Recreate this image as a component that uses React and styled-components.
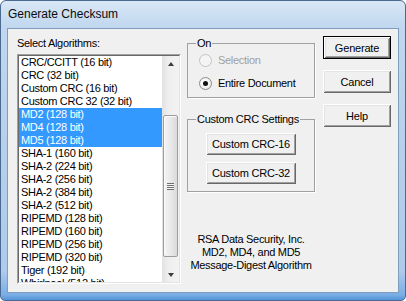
import React from 'react';
import styled, { createGlobalStyle } from 'styled-components';

const GlobalStyle = createGlobalStyle`
  html, body {
    margin: 0;
    padding: 0;
    background: #ffffff;
  }
  #root {
    width: 406px;
    height: 301px;
  }
`;

const Window = styled.div`
  box-sizing: border-box;
  width: 406px;
  height: 301px;
  display: flex;
  flex-direction: column;
  padding: 0 6px 7px 6px;
  border: 1px solid #4a6a92;
  border-radius: 6px 6px 5px 5px;
  background: linear-gradient(
    to bottom,
    #d9e7f6 0px,
    #c0d7ef 26px,
    #b9d1ea 120px,
    #aecbec 270px,
    #79ade4 294px,
    #4d8ed6 300px
  );
  font-family: 'Liberation Sans', Arial, sans-serif;
  font-size: 11px;
  letter-spacing: -0.3px;
  color: #000;
`;

const TitleBar = styled.div`
  height: 27px;
  display: flex;
  align-items: center;
  padding: 0 0 1px 1px;
  box-sizing: border-box;
  font-size: 12px;
  letter-spacing: 0;
  color: #0c0c0c;
`;

const Client = styled.div`
  flex: 1;
  display: flex;
  align-items: flex-start;
  background: #f0f0f0;
  border: 1px solid #7f9dbf;
  padding: 7px 0 0 9px;
`;

const LeftColumn = styled.div`
  width: 164px;
  padding-top: 1px;
  display: flex;
  flex-direction: column;
`;

const Label = styled.div`
  line-height: 13px;
  height: 13px;
  margin-bottom: 4px;
`;

const ListBox = styled.div`
  height: 230px;
  box-sizing: border-box;
  border: 1px solid;
  border-color: #a0a0a0 #ffffff #ffffff #a0a0a0;
`;

const ListInner = styled.div`
  height: 100%;
  box-sizing: border-box;
  display: flex;
  border: 1px solid;
  border-color: #696969 #e3e3e3 #e3e3e3 #696969;
  background: #ffffff;
`;

const Items = styled.div`
  flex: 1;
  overflow: hidden;
`;

const Item = styled.div`
  height: 13px;
  line-height: 13px;
  padding-left: 2px;
  white-space: nowrap;
  background: ${(p) => (p.$selected ? '#3399ff' : 'transparent')};
  color: ${(p) => (p.$selected ? '#ffffff' : '#000000')};
`;

const ScrollBar = styled.div`
  width: 17px;
  display: flex;
  flex-direction: column;
  background: linear-gradient(to right, #e2e2e2, #eeeeee 35%, #f3f3f3);
`;

const ArrowButton = styled.div`
  height: 17px;
  display: flex;
  align-items: center;
  justify-content: center;
`;

const Triangle = styled.div`
  width: 0;
  height: 0;
  border-left: 3.5px solid transparent;
  border-right: 3.5px solid transparent;
  ${(p) =>
    p.$down
      ? 'border-top: 4px solid #3c3c3c; margin-top: 2px;'
      : 'border-bottom: 4px solid #3c3c3c; margin-bottom: 2px;'}
`;

const Track = styled.div`
  flex: 1;
  display: flex;
  flex-direction: column;
`;

const Thumb = styled.div`
  margin: 42px 1px 0 1px;
  height: 142px;
  box-sizing: border-box;
  border: 1px solid #9c9c9c;
  border-radius: 2px;
  background: linear-gradient(to right, #f4f4f4, #e9e9e9 50%, #dadada);
  box-shadow: inset 1px 1px #fbfbfb;
  display: flex;
  align-items: center;
  justify-content: center;
`;

const Grip = styled.div`
  width: 7px;
  height: 7px;
  background: repeating-linear-gradient(
    to bottom,
    #6f6f6f 0px,
    #6f6f6f 1px,
    #f6f6f6 1px,
    #f6f6f6 2px
  );
`;

const MiddleColumn = styled.div`
  width: 128px;
  margin-left: 6px;
  padding-top: 1px;
  display: flex;
  flex-direction: column;
`;

const GroupBox = styled.fieldset`
  margin: ${(p) => (p.$first ? '0' : '15px 0 0 0')};
  padding: ${(p) => p.$pad};
  min-width: 0;
  border: 1px solid #a0a0a0;
  box-shadow: 1px 1px 0 #ffffff;
  display: flex;
  flex-direction: column;
  gap: ${(p) => p.$gap};
  align-items: ${(p) => (p.$center ? 'center' : 'stretch')};
`;

const Legend = styled.legend`
  padding: 0 1px;
  margin-left: 8px;
  line-height: 13px;
  height: 13px;
`;

const RadioRow = styled.label`
  height: 20px;
  display: flex;
  align-items: center;
  gap: 6px;
  padding-left: 11px;
  color: ${(p) => (p.$disabled ? '#a0a0a0' : '#000000')};
`;

const RadioCircle = styled.span`
  width: 13px;
  height: 13px;
  box-sizing: border-box;
  border-radius: 50%;
  border: 1px solid ${(p) => (p.$disabled ? '#c4c4c4' : '#8a8a8a')};
  background: ${(p) =>
    p.$disabled
      ? '#f4f4f4'
      : 'radial-gradient(circle at 40% 40%, #ffffff 0%, #f2f2f2 55%, #dcdcdc 100%)'};
  display: flex;
  align-items: center;
  justify-content: center;
`;

const RadioDot = styled.span`
  width: 5px;
  height: 5px;
  border-radius: 50%;
  background: #111111;
`;

const Button = styled.button`
  box-sizing: border-box;
  width: ${(p) => p.$width};
  height: ${(p) => p.$height};
  padding: 0;
  font-family: 'Liberation Sans', Arial, sans-serif;
  font-size: 11px;
  letter-spacing: -0.2px;
  color: #000;
  background: #f0f0f0;
  border: ${(p) => (p.$default ? '1px solid #000000' : 'none')};
  box-shadow: inset 1px 1px #ffffff, inset -1px -1px #696969,
    inset 2px 2px #e3e3e3, inset -2px -2px #a0a0a0;
  cursor: default;
`;

const Credit = styled.div`
  margin-top: 41px;
  text-align: center;
  line-height: 13px;
  white-space: nowrap;
`;

const RightColumn = styled.div`
  width: 68px;
  margin-left: 8px;
  display: flex;
  flex-direction: column;
  gap: 11px;
`;

const algorithms = [
  'CRC/CCITT (16 bit)',
  'CRC (32 bit)',
  'Custom CRC (16 bit)',
  'Custom CRC 32 (32 bit)',
  'MD2 (128 bit)',
  'MD4 (128 bit)',
  'MD5 (128 bit)',
  'SHA-1 (160 bit)',
  'SHA-2 (224 bit)',
  'SHA-2 (256 bit)',
  'SHA-2 (384 bit)',
  'SHA-2 (512 bit)',
  'RIPEMD (128 bit)',
  'RIPEMD (160 bit)',
  'RIPEMD (256 bit)',
  'RIPEMD (320 bit)',
  'Tiger (192 bit)',
  'Whirlpool (512 bit)',
];

const selected = ['MD2 (128 bit)', 'MD4 (128 bit)', 'MD5 (128 bit)'];

const App = () => {
  return (
    <>
      <GlobalStyle />
      <Window>
        <TitleBar>Generate Checksum</TitleBar>
        <Client>
          <LeftColumn>
            <Label>Select Algorithms:</Label>
            <ListBox>
              <ListInner>
                <Items>
                  {algorithms.map((a) => (
                    <Item key={a} $selected={selected.includes(a)}>
                      {a}
                    </Item>
                  ))}
                </Items>
                <ScrollBar>
                  <ArrowButton>
                    <Triangle />
                  </ArrowButton>
                  <Track>
                    <Thumb>
                      <Grip />
                    </Thumb>
                  </Track>
                  <ArrowButton>
                    <Triangle $down />
                  </ArrowButton>
                </ScrollBar>
              </ListInner>
            </ListBox>
          </LeftColumn>

          <MiddleColumn>
            <GroupBox $first $pad="0 0 4px 0" $gap="3px">
              <Legend>On</Legend>
              <RadioRow $disabled>
                <RadioCircle $disabled />
                Selection
              </RadioRow>
              <RadioRow>
                <RadioCircle>
                  <RadioDot />
                </RadioCircle>
                Entire Document
              </RadioRow>
            </GroupBox>
            <GroupBox $pad="7px 0 7px 0" $gap="7px" $center>
              <Legend>Custom CRC Settings</Legend>
              <Button $width="90px" $height="22px">Custom CRC-16</Button>
              <Button $width="90px" $height="22px">Custom CRC-32</Button>
            </GroupBox>
            <Credit>
              RSA Data Security, Inc.
              <br />
              MD2, MD4, and MD5
              <br />
              Message-Digest Algorithm
            </Credit>
          </MiddleColumn>

          <RightColumn>
            <Button $width="68px" $height="23px" $default>
              Generate
            </Button>
            <Button $width="68px" $height="23px">Cancel</Button>
            <Button $width="68px" $height="23px">Help</Button>
          </RightColumn>
        </Client>
      </Window>
    </>
  );
};

export default App;
